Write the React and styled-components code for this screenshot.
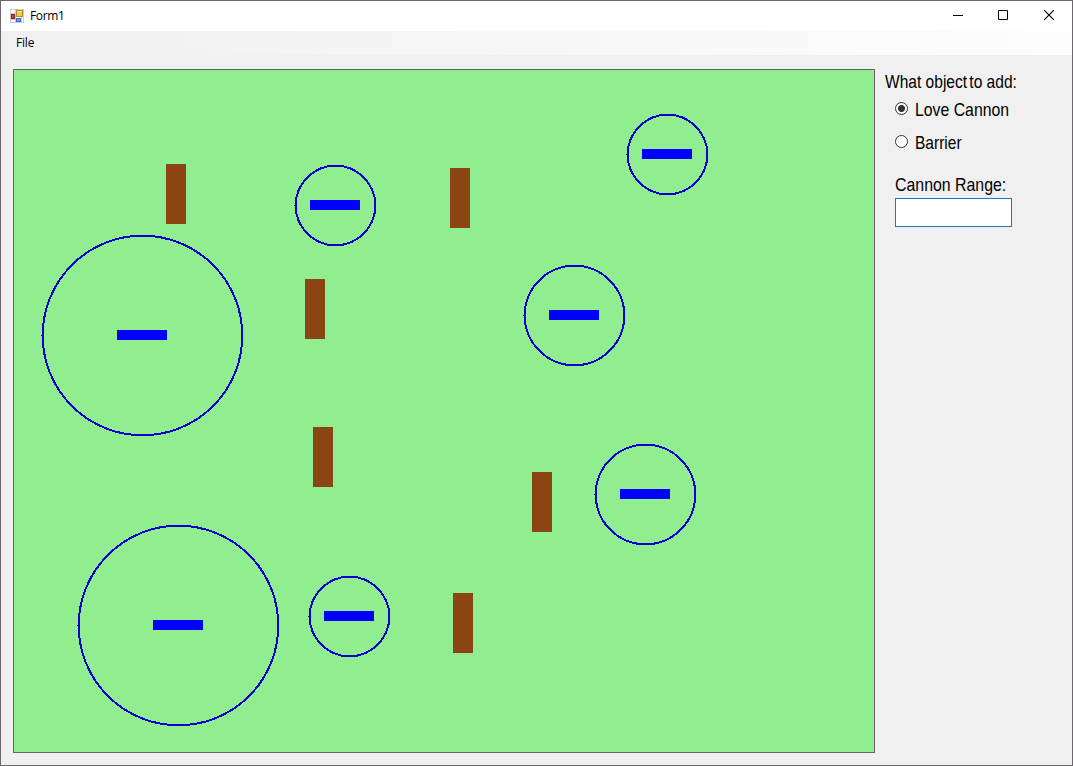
import React from "react";
import styled, { createGlobalStyle } from "styled-components";

const GlobalStyle = createGlobalStyle`
  * { box-sizing: border-box; }
  body { margin: 0; overflow: hidden; }
`;

const Window = styled.div`
  width: 1073px;
  height: 766px;
  display: flex;
  flex-direction: column;
  background: #f0f0f0;
  border: 1px solid #6b696b;
  color: #000;
  font-family: "Open Sans", "Noto Sans", sans-serif;
  font-size: 12px;
`;

const TitleBar = styled.header`
  height: 30px;
  flex: none;
  display: flex;
  align-items: center;
  padding-left: 9px;
  background: #fff;
`;

const AppIcon = styled.svg`
  display: block;
  margin: 0 6px 1px 0;
`;

const Title = styled.span`
  flex: 1;
  line-height: 28px;
  letter-spacing: -0.35px;
`;

const CaptionButton = styled.button`
  width: ${(p) => p.$width}px;
  height: 30px;
  padding: 0 0 2px;
  border: 0;
  background: transparent;
  display: grid;
  place-items: center;
`;

const MenuStrip = styled.nav`
  height: 24px;
  flex: none;
  display: flex;
  align-items: center;
  padding-left: 15px;
  background: linear-gradient(90deg, #f0f0f0, #fdfdfd);
`;

const MenuItem = styled.span`
  line-height: 24px;
  letter-spacing: -0.2px;
`;

const Body = styled.main`
  flex: 1;
  display: flex;
  align-items: flex-start;
  padding: 14px 0 0 12px;
`;

const Field = styled.svg`
  display: block;
  flex: none;
  width: 862px;
  height: 684px;
  border: 1px solid #646464;
  background: #90ee90;
  shape-rendering: crispEdges;
`;

const Options = styled.aside`
  display: flex;
  flex-direction: column;
  padding-left: 10px;
  font-family: "Liberation Sans", Arial, sans-serif;
  font-size: 19px;
`;

const Label = styled.span`
  display: block;
  height: 24px;
  line-height: 26px;
  white-space: nowrap;
  transform: scaleX(${(p) => p.$stretch});
  transform-origin: left center;
`;

const TightWord = styled.span`
  margin-left: -2.5px;
`;

const RadioGroup = styled.div`
  display: flex;
  flex-direction: column;
  gap: 9px;
  padding: 4px 0 0 10px;
`;

const RadioRow = styled.label`
  display: flex;
  height: 24px;
`;

const RadioMark = styled.span`
  width: 13px;
  height: 13px;
  flex: none;
  margin: 5px 7px 0 0;
  border: 1px solid #333;
  border-radius: 50%;
  background: ${(p) => (p.$checked ? "radial-gradient(circle, #333 3.1px, #fff 3.9px)" : "#fff")};
`;

const RangeGroup = styled.div`
  display: flex;
  flex-direction: column;
  padding: 18px 0 0 10px;
`;

const RangeInput = styled.input`
  width: 117px;
  height: 29px;
  margin-top: 2px;
  padding: 2px 4px;
  border: 1px solid #1a78c0;
  border-radius: 0;
  background: #fff;
  outline: none;
  font: inherit;
`;

const cannons = [
  { x: 667, y: 154, range: 40 },
  { x: 335, y: 205, range: 40 },
  { x: 574, y: 315, range: 50 },
  { x: 142, y: 335, range: 100 },
  { x: 645, y: 494, range: 50 },
  { x: 349, y: 616, range: 40 },
  { x: 178, y: 625, range: 100 },
];

const barriers = [
  [166, 164],
  [450, 168],
  [305, 279],
  [313, 427],
  [532, 472],
  [453, 593],
];

function Cannon({ x, y, range }) {
  return (
    <g>
      <circle cx={x + 0.5} cy={y + 0.5} r={range - 0.2} fill="none" stroke="#0000d2" strokeWidth="2" />
      <rect x={x - range - 1} y={y} width="1" height="1" fill="#0000d2" />
      <rect x={x - 25} y={y - 5} width="50" height="10" fill="#00f" />
    </g>
  );
}

function FormIcon() {
  return (
    <AppIcon width="14" height="14" viewBox="0 0 14 14">
      <rect x=".5" y=".5" width="13" height="13" fill="#fff" stroke="#c9cdd1" />
      <path d="M0 4.5h6M5.5 0v14M0 10.5h6M11.5 8v6" stroke="#c4cbd2" fill="none" />
      <rect x="1.5" y="5.5" width="3" height="4" fill="#c74036" stroke="#8e2626" />
      <rect x="6.5" y="1.5" width="6" height="6" fill="#f6c744" stroke="#b88a2a" />
      <path d="M7 2.5h5" stroke="#ffe9a0" />
      <rect x="6.5" y="9.5" width="4" height="3" fill="#6ca1e4" stroke="#3c69b4" />
    </AppIcon>
  );
}

function Radio({ checked, stretch, children }) {
  return (
    <RadioRow>
      <RadioMark $checked={checked} />
      <Label $stretch={stretch}>{children}</Label>
    </RadioRow>
  );
}

export default function App() {
  return (
    <Window>
      <GlobalStyle />
      <TitleBar>
        <FormIcon />
        <Title>Form1</Title>
        <CaptionButton $width={45} aria-label="Minimize">
          <svg width="10" height="10"><path d="M0 5.5h10" stroke="#000" /></svg>
        </CaptionButton>
        <CaptionButton $width={46} aria-label="Maximize">
          <svg width="10" height="10"><path d="M.5.5h9v9h-9z" fill="none" stroke="#000" /></svg>
        </CaptionButton>
        <CaptionButton $width={46} aria-label="Close">
          <svg width="10" height="10"><path d="M0 0l10 10M10 0L0 10" stroke="#000" strokeWidth="1.1" /></svg>
        </CaptionButton>
      </TitleBar>
      <MenuStrip>
        <MenuItem>File</MenuItem>
      </MenuStrip>
      <Body>
        <Field viewBox="14 70 860 682">
          {barriers.map(([x, y]) => (
            <rect key={`${x}-${y}`} x={x} y={y} width="20" height="60" fill="#8b4513" />
          ))}
          {cannons.map((c) => (
            <Cannon key={`${c.x}-${c.y}`} {...c} />
          ))}
        </Field>
        <Options>
          <Label $stretch={0.818}>
            What object <TightWord>to add:</TightWord>
          </Label>
          <RadioGroup>
            <Radio checked stretch={0.832}>Love Cannon</Radio>
            <Radio stretch={0.818}>Barrier</Radio>
          </RadioGroup>
          <RangeGroup>
            <Label $stretch={0.836}>Cannon Range:</Label>
            <RangeInput aria-label="Cannon Range" />
          </RangeGroup>
        </Options>
      </Body>
    </Window>
  );
}
